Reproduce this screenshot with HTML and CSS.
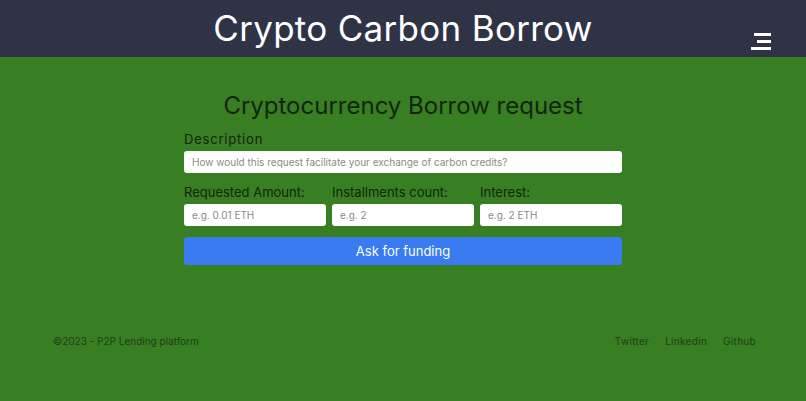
FILE: index.html
```html
<!DOCTYPE html>
<html lang="en">
<head>
  <meta charset="UTF-8">
  <meta name="viewport" content="width=device-width, initial-scale=1.0">
  <title>Crypto Carbon Borrow</title>
  <link rel="stylesheet" href="styles.css">
</head>
<body>
  <header class="topbar">
    <div></div>
    <h1 class="brand">Crypto Carbon Borrow</h1>
    <button class="menu-btn" aria-label="Menu">
      <svg width="20" height="17" viewBox="0 0 20 17">
        <rect x="3" y="0" width="17" height="3" fill="#fff"/>
        <rect x="6" y="7" width="14" height="3" fill="#fff"/>
        <rect x="0" y="14" width="20" height="3" fill="#fff"/>
      </svg>
    </button>
  </header>

  <main class="content">
    <form class="borrow-form">
      <h2>Cryptocurrency Borrow request</h2>
      <div class="field">
        <label for="description">Description</label>
        <input type="text" id="description" placeholder="How would this request facilitate your exchange of carbon credits?">
      </div>
      <div class="row">
        <div class="field">
          <label for="amount">Requested Amount:</label>
          <input type="text" id="amount" placeholder="e.g. 0.01 ETH">
        </div>
        <div class="field">
          <label for="installments">Installments count:</label>
          <input type="text" id="installments" placeholder="e.g. 2">
        </div>
        <div class="field">
          <label for="interest">Interest:</label>
          <input type="text" id="interest" placeholder="e.g. 2 ETH">
        </div>
      </div>
      <button type="submit" class="submit-btn">Ask for funding</button>
    </form>
  </main>

  <footer class="footer">
    <span>©2023 - P2P Lending platform</span>
    <nav class="footer-links">
      <a href="#">Twitter</a>
      <a href="#">Linkedin</a>
      <a href="#">Github</a>
    </nav>
  </footer>
</body>
</html>
```

FILE: styles.css
```css
body {
  font-family: Inter, 'Open Sans', sans-serif;
  margin: 0;
  height: 401px;
  background-color: #387e23;
  color: #13240f;
}
.topbar {
  height: 57px;
  background-color: #2e3346;
  display: grid;
  grid-template-columns: 1fr auto 1fr;
  align-items: center;
}
.brand {
  margin: 0;
  color: #fff;
  font-weight: 400;
  font-size: 35px;
  letter-spacing: 0.3px;
  padding-bottom: 2px;
}
.menu-btn {
  justify-self: end;
  align-self: end;
  margin: 0 35px 7px 0;
  padding: 0;
  background: none;
  border: none;
  line-height: 0;
  cursor: pointer;
}
.content {
  display: flex;
  justify-content: center;
  padding-top: 34px;
}
.borrow-form {
  width: 438px;
  display: flex;
  flex-direction: column;
  gap: 11px;
}
.borrow-form h2 {
  margin: 0;
  text-align: center;
  font-weight: 400;
  font-size: 24px;
  color: #13240f;
}
.field {
  display: flex;
  flex-direction: column;
  gap: 4px;
  min-width: 0;
}
label {
  font-size: 13px;
  color: #13240f;
}
label[for="description"] {
  letter-spacing: 0.8px;
}
input {
  height: 22px;
  box-sizing: border-box;
  padding: 0 8px;
  border: none;
  border-radius: 3px;
  background: #fff;
  font-family: inherit;
  font-size: 10px;
}
input::placeholder {
  color: #8a8a8a;
}
.row {
  display: grid;
  grid-template-columns: 1fr 1fr 1fr;
  gap: 6px;
}
.submit-btn {
  height: 28px;
  border: none;
  border-radius: 3px;
  background-color: #3a7bf2;
  color: #fff;
  font-family: inherit;
  font-size: 13px;
  cursor: pointer;
}
.footer {
  display: flex;
  justify-content: space-between;
  padding: 70px 50px 0 53px;
  font-size: 10px;
  color: #1f3d1a;
}
.footer-links {
  display: flex;
  gap: 16px;
  letter-spacing: 0.3px;
}
.footer-links a {
  color: #1f3d1a;
  text-decoration: none;
}
```
